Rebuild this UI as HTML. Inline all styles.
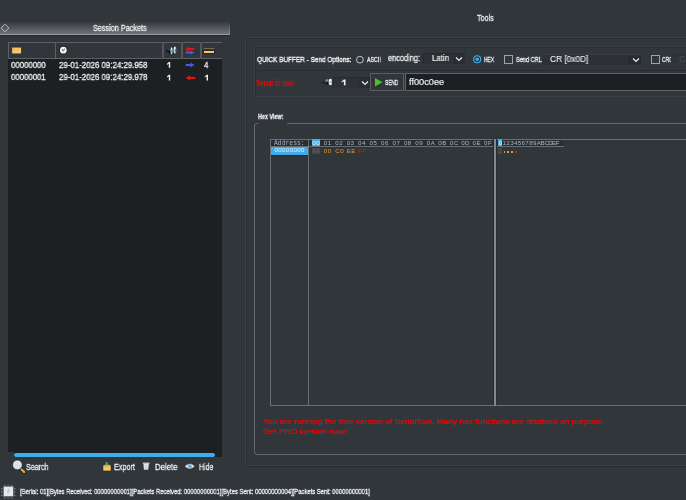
<!DOCTYPE html>
<html><head><meta charset="utf-8">
<style>
html,body{margin:0;padding:0;}
body{width:686px;height:500px;overflow:hidden;background:#31363b;position:relative;font-family:"Liberation Sans",sans-serif;color:#eff0f1;}
.a{position:absolute;}
.t{position:absolute;white-space:nowrap;line-height:1;transform-origin:0 0;will-change:transform;-webkit-text-stroke-width:0.3px;}
.m{font-family:"Liberation Mono",monospace;-webkit-text-stroke-width:0 !important;}
</style></head><body>

<!-- ============ LEFT PANEL ============ -->
<!-- title bar -->
<div class="a" style="left:0;top:22px;width:230px;height:12px;background:linear-gradient(#353a3e,#707376);"></div>
<div class="a" style="left:0;top:34px;width:230px;height:1px;background:#9a9c9e;"></div>
<div class="a" style="left:0;top:35px;width:230px;height:1px;background:#22262a;"></div>
<div class="a" style="left:229px;top:26px;width:1px;height:8px;background:linear-gradient(#5a5e62,#8a8d90);"></div>
<svg class="a" style="left:0px;top:22px" width="12" height="12" viewBox="0 22 12 12"><path d="M1.2 28 L5 24.2 L8.8 28 L5 31.8 Z" fill="none" stroke="#c4c6c8" stroke-width="0.9"/></svg>
<div id="sp" class="t" style="left:92.80px;top:23.40px;font-size:9.5px;transform:scaleX(0.764);">Session Packets</div>

<!-- table -->
<div class="a" style="left:8px;top:42px;width:214px;height:410px;background:#1d2023;"></div>
<div class="a" style="left:8px;top:42px;width:214px;height:17px;background:#31363b;"></div>
<div class="a" style="left:8px;top:42px;width:214px;height:1px;background:#5d6165;"></div>
<div class="a" style="left:8px;top:58px;width:214px;height:1px;background:#5d6165;"></div>
<div class="a" style="left:8px;top:42px;width:1px;height:17px;background:#5d6165;"></div>
<div class="a" style="left:55px;top:42px;width:1px;height:17px;background:#5d6165;"></div>
<div class="a" style="left:162px;top:42px;width:2px;height:17px;background:#52565a;"></div>
<div class="a" style="left:181px;top:42px;width:2px;height:17px;background:#52565a;"></div>
<div class="a" style="left:200px;top:42px;width:2px;height:17px;background:#52565a;"></div>
<!-- header icons -->
<svg class="a" style="left:10px;top:45px" width="13" height="11" viewBox="10 45 13 11"><rect x="11.8" y="47.1" width="9.6" height="6.8" fill="#f5c66a" stroke="#1c2a3c" stroke-width="0.7"/><path d="M13 49.5 h6" stroke="#e0a850" stroke-width="0.5"/></svg>
<svg class="a" style="left:58px;top:45px" width="11" height="11" viewBox="58 45 11 11"><circle cx="63.3" cy="50.2" r="4.1" fill="#15191c"/><circle cx="63.3" cy="50.2" r="3.4" fill="#f6f6f6"/><path d="M61.9 49.5 L63.2 50.4 L64.9 48.8" stroke="#1a1d20" stroke-width="0.9" fill="none"/><path d="M63.3 50.8 V52.2" stroke="#e0a070" stroke-width="0.8"/></svg>
<svg class="a" style="left:164px;top:45px" width="14" height="10" viewBox="164 45 14 10"><path d="M165.8 50.9 L171 48.2 L171 54 Z" fill="#08090a"/><path d="M167 50.2 L169.6 48.9 L169.6 50.6 Z" fill="#60646a"/><ellipse cx="171.7" cy="50.7" rx="1.2" ry="3.4" fill="#eef2f6"/><rect x="171" y="50.2" width="1.6" height="2.6" fill="#5ab4ea"/><path d="M173.1 46.8 V54" stroke="#050607" stroke-width="1"/><ellipse cx="174.8" cy="50" rx="1.3" ry="3.5" fill="#eef2f6"/><rect x="174.7" y="48.6" width="1.5" height="4" fill="#3a8ed8"/></svg>
<svg class="a" style="left:184px;top:45px" width="12" height="11" viewBox="184 45 12 11"><path d="M185.3 49 L188.9 46.5 L188.9 48 L194.2 48 L194.2 50 L188.9 50 L188.9 51.5 Z" fill="#ff0a0a"/><path d="M194.2 52.5 L190.7 50.5 L190.7 51.6 L185.7 51.6 L185.7 53.4 L190.7 53.4 L190.7 54.5 Z" fill="#4a5ae6"/></svg>
<div class="a" style="left:204.4px;top:48.1px;width:9.2px;height:1.2px;background:#7e6844;"></div>
<div class="a" style="left:204.2px;top:50.6px;width:9.6px;height:2.4px;background:#f5c66a;box-shadow:0 0 0 0.7px #1c2430;"></div>

<!-- rows -->
<div id="t1" class="t" style="left:11.4px;top:60.6px;font-size:8.5px;transform:scaleX(0.919);">00000000</div>
<div id="t2" class="t" style="left:58.6px;top:60.6px;font-size:8.5px;transform:scaleX(0.927);">29-01-2026 09:24:29.958</div>
<svg class="a" style="left:166px;top:61px" width="6" height="8" viewBox="166 61 6 8"><path d="M168.80 62.00 H170.20 V67.80 H168.80 V63.60 L167.00 64.90 V63.70 Z" fill="#eff0f1"/></svg>
<svg class="a" style="left:184px;top:61px" width="12" height="8" viewBox="184 61 12 8"><path d="M194.4 65.1 L190.4 62.6 L190.4 64.1 L185.7 64.1 L185.7 66.1 L190.4 66.1 L190.4 67.6 Z" fill="#4a5ae6"/></svg>
<div id="t4" class="t" style="left:204.2px;top:60.6px;font-size:8.5px;transform:scaleX(0.908);">4</div>

<div id="t5" class="t" style="left:11.4px;top:73.2px;font-size:8.5px;transform:scaleX(0.917);">00000001</div>
<div id="t6" class="t" style="left:58.6px;top:73.2px;font-size:8.5px;transform:scaleX(0.927);">29-01-2026 09:24:29.978</div>
<svg class="a" style="left:166px;top:73px" width="6" height="8" viewBox="166 73 6 8"><path d="M168.80 74.70 H170.20 V80.40 H168.80 V76.30 L167.00 77.60 V76.40 Z" fill="#eff0f1"/></svg>
<svg class="a" style="left:184px;top:74px" width="12" height="8" viewBox="184 74 12 8"><path d="M185.9 77.9 L190 75.3 L190 76.9 L195.3 76.9 L195.3 78.9 L190 78.9 L190 80.5 Z" fill="#ff0a0a"/></svg>
<svg class="a" style="left:203px;top:73px" width="6" height="8" viewBox="203 73 6 8"><path d="M206.60 74.70 H208.00 V80.40 H206.60 V76.30 L204.80 77.60 V76.40 Z" fill="#eff0f1"/></svg>

<!-- scrollbar -->
<div class="a" style="left:14px;top:452px;width:208px;height:5px;background:#1d2023;"></div>
<div class="a" style="left:14px;top:453px;width:201px;height:4px;border-radius:2px;background:#3daee9;"></div>

<!-- buttons -->
<svg class="a" style="left:11px;top:459px" width="16" height="15" viewBox="11 459 16 15"><path d="M21.3 469.2 L24.6 472.4" stroke="#15202c" stroke-width="3.4" stroke-linecap="round"/><path d="M21.6 469.5 L24.3 472.1" stroke="#f5a028" stroke-width="2.2" stroke-linecap="round"/><circle cx="17.4" cy="464.9" r="4.1" fill="#d4e2f0" stroke="#f4f8fc" stroke-width="1.1"/><circle cx="17.4" cy="464.9" r="4.7" fill="none" stroke="#1a222c" stroke-width="0.5"/></svg>
<div id="t9" class="t" style="left:26.30px;top:462.90px;font-size:9.2px;transform:scaleX(0.769);">Search</div>
<svg class="a" style="left:101px;top:461px" width="12" height="12" viewBox="101 461 12 12"><path d="M103 465.5 L105 464.6 L109 464.6 L111 465.5 L111 470.9 L103 470.9 Z" fill="#f5c66a" stroke="#1c2430" stroke-width="0.5"/><path d="M103.2 466.6 H110.8" stroke="#d8a24e" stroke-width="0.6"/><rect x="105.7" y="462.1" width="2" height="3.4" fill="#3cb43c"/></svg>
<div id="t10" class="t" style="left:113.9px;top:462.8px;font-size:9px;transform:scaleX(0.804);">Export</div>
<svg class="a" style="left:141px;top:461px" width="10" height="11" viewBox="141 461 10 11"><path d="M143 463.2 H149.2 L148.6 470 H143.6 Z" fill="#dfe8f2" stroke="#2a3440" stroke-width="0.6"/><rect x="142.8" y="462.6" width="6.6" height="1.3" fill="#c8d2dc"/><path d="M145.2 465 V469 M147 465 V469" stroke="#a8b4c0" stroke-width="0.5"/></svg>
<div id="t11" class="t" style="left:155.4px;top:462.8px;font-size:9px;transform:scaleX(0.864);">Delete</div>
<svg class="a" style="left:183px;top:461px" width="14" height="11" viewBox="183 461 14 11"><path d="M184.8 466.3 Q189.8 461.4 194.7 466.3 Q189.8 471.2 184.8 466.3 Z" fill="#e8f2fa" stroke="#c8b078" stroke-width="0.8"/><path d="M184.2 466.3 Q189.8 460.6 195.3 466.3 Q189.8 472 184.2 466.3 Z" fill="none" stroke="#151b22" stroke-width="0.5"/><circle cx="189.8" cy="466.3" r="2.3" fill="#8cc8ec"/><path d="M188.4 465 L191.2 467.6" stroke="#4a6a90" stroke-width="1"/></svg>
<div id="t12" class="t" style="left:199.4px;top:462.8px;font-size:9px;transform:scaleX(0.772);">Hide</div>

<!-- status bar -->
<svg class="a" style="left:0px;top:484px" width="17" height="16" viewBox="0 484 17 16"><g fill="#6c737a"><rect x="4.2" y="484.8" width="1.5" height="1.5"/><rect x="7.4" y="484.8" width="1.5" height="1.5"/><rect x="10.9" y="484.8" width="1.5" height="1.5"/><rect x="4.2" y="497.4" width="1.5" height="1.5"/><rect x="7.4" y="497.4" width="1.5" height="1.5"/><rect x="10.9" y="497.4" width="1.5" height="1.5"/><rect x="1" y="488" width="1.5" height="1.5"/><rect x="1" y="491.2" width="1.5" height="1.5"/><rect x="1" y="494.5" width="1.5" height="1.5"/><rect x="14" y="488" width="1.5" height="1.5"/><rect x="14" y="491.2" width="1.5" height="1.5"/><rect x="14" y="494.5" width="1.5" height="1.5"/></g><rect x="3.4" y="486.3" width="9.9" height="10.1" fill="#dde9f6" stroke="#56667a" stroke-width="0.6"/><path d="M8.6 488.8 L6.8 492 L8.2 492 L7.2 494.6 L9.6 491 L8.2 491 L9.4 488.8 Z" fill="#f0b030"/></svg>
<div id="t13" class="t" style="left:20.2px;top:488px;font-size:7.6px;transform:scaleX(0.776);">[Serial: 01][Bytes Received: 00000000001][Packets Received: 00000000001][Bytes Sent: 00000000004][Packets Sent: 00000000001]</div>

<!-- ============ RIGHT PANEL ============ -->
<div id="t14" class="t" style="left:477.20px;top:13.80px;font-size:9px;transform:scaleX(0.792);">Tools</div>

<!-- outer box -->
<div class="a" style="left:245px;top:37px;width:460px;height:427px;border-top:1px solid #3a3f44;border-left:1px solid #3a3f44;"></div><div class="a" style="left:246px;top:38px;width:460px;height:427px;border-top:1px solid #2a2e32;border-left:1px solid #2a2e32;"></div><div class="a" style="left:245px;top:466px;width:441px;height:1px;background:#2a2e32;"></div><div class="a" style="left:246px;top:465px;width:440px;height:1px;background:#3a3f44;"></div>
<!-- inner quick buffer box -->
<div class="a" style="left:254px;top:46px;width:460px;height:48px;border-top:1px solid #3a3f44;border-left:1px solid #3a3f44;"></div><div class="a" style="left:255px;top:47px;width:460px;height:48px;border:1px solid #292d31;"></div><div class="a" style="left:255px;top:96px;width:431px;height:1px;background:#3a3f44;"></div>
<div class="a" style="left:256px;top:70px;width:430px;height:1px;background:#292d31;"></div>

<div id="t15" class="t" style="left:257.00px;top:55.50px;font-size:8px;transform:scaleX(0.803);-webkit-text-stroke-width:0.4px;">QUICK BUFFER - Send Options:</div>
<svg class="a" style="left:354px;top:54px" width="12" height="12" viewBox="354 54 12 12"><circle cx="359.9" cy="59.7" r="3.4" fill="none" stroke="#d4d6d8" stroke-width="0.9"/></svg>
<div id="t16" class="t" style="left:366.80px;top:57.00px;font-size:6.6px;transform:scaleX(0.798);">ASCII</div>
<div id="t17" class="t" style="left:387.6px;top:54px;font-size:9px;transform:scaleX(0.821);">encoding:</div>
<div class="a" style="left:423px;top:53px;width:42px;height:11px;background:#2e3236;border-top:1px solid #25292c;border-left:1px solid #25292c;box-sizing:border-box;"></div><div class="a" style="left:454px;top:55px;width:11px;height:9px;background:#292d31;"></div>
<div id="t18" class="t" style="left:432.20px;top:54.30px;font-size:8.5px;transform:scaleX(0.924);-webkit-text-stroke-width:0.2px;">Latin</div>
<svg class="a" style="left:455px;top:56px" width="8" height="6" viewBox="0 0 8 6"><path d="M1 1.5 L4 4.5 L7 1.5" stroke="#eee" stroke-width="1.2" fill="none"/></svg>
<svg class="a" style="left:471px;top:53px" width="12" height="12" viewBox="471 53 12 12"><circle cx="477.2" cy="59.3" r="3.5" fill="none" stroke="#3daee9" stroke-width="1.1"/><circle cx="477.2" cy="59.3" r="1.7" fill="#3daee9"/></svg>

<div id="t19" class="t" style="left:484.30px;top:57.00px;font-size:6.6px;transform:scaleX(0.736);">HEX</div>
<div class="a" style="left:504px;top:55px;width:7px;height:7px;border:1px solid #a0a2a4;"></div>
<div id="t20" class="t" style="left:516.00px;top:57.00px;font-size:6.6px;transform:scaleX(0.85);">Send CRLF</div>
<div class="a" style="left:542px;top:54px;width:99px;height:10px;background:#2d3136;border-top:1px solid #3a3f44;z-index:1;"></div>
<div id="t21" class="t" style="left:550.2px;top:55px;font-size:8.5px;transform:scaleX(0.979);z-index:2;-webkit-text-stroke-width:0.1px;">CR [0x0D]</div>
<div class="a" style="left:628px;top:56px;width:13px;height:8px;background:#272b2f;z-index:1;"></div><svg class="a" style="left:632px;top:57px;z-index:2" width="8" height="6" viewBox="0 0 8 6"><path d="M1 1.5 L4 4.5 L7 1.5" stroke="#eee" stroke-width="1.2" fill="none"/></svg>
<div class="a" style="left:651px;top:55px;width:7px;height:7px;border:1px solid #a0a2a4;"></div>
<div id="t22" class="t" style="left:662.40px;top:57.00px;font-size:6.6px;transform:scaleX(0.75);">CRC</div>
<div class="a" style="left:671px;top:54px;width:15px;height:9px;background:#2e3337;z-index:1;"></div>
<div class="a" style="left:679px;top:55px;font-size:9px;line-height:1;color:#4a4f54;z-index:2;">C</div>

<div id="t23" class="t" style="left:256.40px;top:79.40px;font-size:8.5px;color:#ff0000;font-weight:bold;transform:scaleX(0.742);-webkit-text-stroke-width:0px;">Serial in use:</div>
<svg class="a" style="left:320px;top:77px" width="14" height="10" viewBox="320 77 14 10"><path d="M321.6 82.4 L328.6 78.9 L328.6 85.1 Z" fill="#15181b"/><path d="M325.5 79.8 L328.4 78.9 L328.4 81.5 L325.5 81.8 Z" fill="#8a8e92"/><path d="M323 82 L326 81 L326 82.6 Z" fill="#55595d"/><ellipse cx="330.4" cy="82" rx="1.7" ry="3.2" fill="#f2f6fa"/><path d="M331.2 79.5 Q332.4 82 331.2 84.5 Q331 82 331.2 79.5 Z" fill="#2a7ad8"/><rect x="329.4" y="81.4" width="1.6" height="1.8" fill="#8ad0f0"/></svg>
<div class="a" style="left:333px;top:77px;width:37px;height:11px;background:#2e3236;border-top:1px solid #25292c;border-left:1px solid #25292c;box-sizing:border-box;"></div><div class="a" style="left:359px;top:79px;width:11px;height:9px;background:#292d31;"></div>
<svg class="a" style="left:340px;top:78px" width="6" height="8" viewBox="340 78 6 8"><path d="M343.90 79.60 H345.50 V85.20 H343.90 V81.20 L341.80 82.50 V81.30 Z" fill="#eff0f1"/></svg>
<svg class="a" style="left:361px;top:80px" width="8" height="6" viewBox="0 0 8 6"><path d="M1 1.5 L4 4.5 L7 1.5" stroke="#eee" stroke-width="1.2" fill="none"/></svg>
<div class="a" style="left:370px;top:73px;width:32px;height:16px;border:1px solid #5a5e62;background:#31363b;"></div>
<svg class="a" style="left:375px;top:78px" width="8" height="9" viewBox="0 0 8 9"><path d="M0 0 L7.5 4.2 L0 8.5 Z" fill="#4cc02c"/></svg>
<div id="t25" class="t" style="left:385.00px;top:79.70px;font-size:6.6px;transform:scaleX(0.73);">SEND</div>
<div class="a" style="left:405px;top:73px;width:290px;height:16px;border:1px solid #62666a;background:#1d2023;"></div>
<div id="t26" class="t" style="left:408.80px;top:78.30px;font-size:9px;transform:scaleX(1.024);-webkit-text-stroke-width:0.15px;">ff00c0ee</div>

<!-- Hex View group -->
<div id="t27" class="t" style="left:258.00px;top:112.60px;font-size:7px;font-weight:bold;transform:scaleX(0.77);">Hex View:</div>
<div class="a" style="left:254px;top:123px;width:460px;height:330px;border:1px solid #64686c;border-radius:3px;"></div>
<div class="a" style="left:258px;top:122px;width:29px;height:3px;background:#31363b;"></div>

<!-- hex table -->
<div class="a" style="left:270px;top:139px;width:416px;height:1px;background:#6a6e72;"></div>
<div class="a" style="left:271px;top:140px;width:292px;height:7px;background:#2a2e32;"></div>
<div class="a" style="left:270px;top:146px;width:294px;height:1px;background:#6a6e72;"></div>
<div class="a" style="left:270px;top:405px;width:416px;height:1px;background:#6a6e72;"></div>
<div class="a" style="left:270px;top:139px;width:1px;height:267px;background:#6a6e72;"></div>
<div class="a" style="left:308px;top:139px;width:1px;height:267px;background:#6a6e72;"></div>
<div class="a" style="left:493px;top:139px;width:1px;height:266px;background:#272b2f;"></div><div class="a" style="left:496px;top:139px;width:1px;height:266px;background:#2a2e32;"></div><div class="a" style="left:494px;top:139px;width:2px;height:267px;background:#85888b;"></div>
<div class="a" style="left:271px;top:147px;width:37px;height:8px;background:#3daee9;"></div><div class="a" style="left:271px;top:155px;width:37px;height:1px;background:#2a2422;"></div>

<div id="t28" class="t m" style="left:274.20px;top:140.70px;font-size:6.4px;color:#a2b4ca;transform:scaleX(1);">Address:</div>
<div class="a" style="left:312px;top:139px;width:8px;height:7px;background:#3daee9;"></div>
<div class="a" style="left:312.30px;top:139.65px;font-size:6.2px;line-height:1;letter-spacing:0.5px;color:#eef6fc;white-space:nowrap;">00</div><div class="a" style="left:323.75px;top:139.65px;font-size:6.2px;line-height:1;letter-spacing:0.5px;color:#a4b6cc;white-space:nowrap;">01</div><div class="a" style="left:335.20px;top:139.65px;font-size:6.2px;line-height:1;letter-spacing:0.5px;color:#a4b6cc;white-space:nowrap;">02</div><div class="a" style="left:346.65px;top:139.65px;font-size:6.2px;line-height:1;letter-spacing:0.5px;color:#a4b6cc;white-space:nowrap;">03</div><div class="a" style="left:358.10px;top:139.65px;font-size:6.2px;line-height:1;letter-spacing:0.5px;color:#a4b6cc;white-space:nowrap;">04</div><div class="a" style="left:369.55px;top:139.65px;font-size:6.2px;line-height:1;letter-spacing:0.5px;color:#a4b6cc;white-space:nowrap;">05</div><div class="a" style="left:381.00px;top:139.65px;font-size:6.2px;line-height:1;letter-spacing:0.5px;color:#a4b6cc;white-space:nowrap;">06</div><div class="a" style="left:392.45px;top:139.65px;font-size:6.2px;line-height:1;letter-spacing:0.5px;color:#a4b6cc;white-space:nowrap;">07</div><div class="a" style="left:403.90px;top:139.65px;font-size:6.2px;line-height:1;letter-spacing:0.5px;color:#a4b6cc;white-space:nowrap;">08</div><div class="a" style="left:415.35px;top:139.65px;font-size:6.2px;line-height:1;letter-spacing:0.5px;color:#a4b6cc;white-space:nowrap;">09</div><div class="a" style="left:426.80px;top:139.65px;font-size:6.2px;line-height:1;letter-spacing:0.5px;color:#a4b6cc;white-space:nowrap;">0A</div><div class="a" style="left:438.25px;top:139.65px;font-size:6.2px;line-height:1;letter-spacing:0.5px;color:#a4b6cc;white-space:nowrap;">0B</div><div class="a" style="left:449.70px;top:139.65px;font-size:6.2px;line-height:1;letter-spacing:0.5px;color:#a4b6cc;white-space:nowrap;">0C</div><div class="a" style="left:461.15px;top:139.65px;font-size:6.2px;line-height:1;letter-spacing:0.5px;color:#a4b6cc;white-space:nowrap;">0D</div><div class="a" style="left:472.60px;top:139.65px;font-size:6.2px;line-height:1;letter-spacing:0.5px;color:#a4b6cc;white-space:nowrap;">0E</div><div class="a" style="left:484.05px;top:139.65px;font-size:6.2px;line-height:1;letter-spacing:0.5px;color:#a4b6cc;white-space:nowrap;">0F</div>
<div class="a" style="left:274.40px;top:147.25px;font-size:6.2px;line-height:1;letter-spacing:0px;color:#e4f2fc;white-space:nowrap;">0</div><div class="a" style="left:278.21px;top:147.25px;font-size:6.2px;line-height:1;letter-spacing:0px;color:#e4f2fc;white-space:nowrap;">0</div><div class="a" style="left:282.02px;top:147.25px;font-size:6.2px;line-height:1;letter-spacing:0px;color:#e4f2fc;white-space:nowrap;">0</div><div class="a" style="left:285.83px;top:147.25px;font-size:6.2px;line-height:1;letter-spacing:0px;color:#e4f2fc;white-space:nowrap;">0</div><div class="a" style="left:289.64px;top:147.25px;font-size:6.2px;line-height:1;letter-spacing:0px;color:#e4f2fc;white-space:nowrap;">0</div><div class="a" style="left:293.45px;top:147.25px;font-size:6.2px;line-height:1;letter-spacing:0px;color:#e4f2fc;white-space:nowrap;">0</div><div class="a" style="left:297.26px;top:147.25px;font-size:6.2px;line-height:1;letter-spacing:0px;color:#e4f2fc;white-space:nowrap;">0</div><div class="a" style="left:301.07px;top:147.25px;font-size:6.2px;line-height:1;letter-spacing:0px;color:#e4f2fc;white-space:nowrap;">0</div>
<div class="a" style="left:312px;top:148px;width:8px;height:6px;background:#45494d;"></div>
<div class="a" style="left:312.30px;top:147.75px;font-size:6.2px;line-height:1;letter-spacing:0.5px;color:#5c6064;white-space:nowrap;">FF</div><div class="a" style="left:323.75px;top:147.75px;font-size:6.2px;line-height:1;letter-spacing:0.5px;color:#e09a28;white-space:nowrap;">00</div><div class="a" style="left:335.20px;top:147.75px;font-size:6.2px;line-height:1;letter-spacing:0.5px;color:#e09a28;white-space:nowrap;">C0</div><div class="a" style="left:346.65px;top:147.75px;font-size:6.2px;line-height:1;letter-spacing:0.5px;color:#e09a28;white-space:nowrap;">EE</div><div class="a" style="left:358.10px;top:147.75px;font-size:6.2px;line-height:1;letter-spacing:0.5px;color:#e01818;white-space:nowrap;">FF</div>
<div class="a" style="left:498px;top:139px;width:4px;height:7px;background:#3daee9;"></div>
<div class="a" style="left:498.70px;top:139.65px;font-size:6.2px;line-height:1;letter-spacing:0px;color:#eef6fc;white-space:nowrap;">0</div><div class="a" style="left:502.51px;top:139.65px;font-size:6.2px;line-height:1;letter-spacing:0px;color:#a4b6cc;white-space:nowrap;">1</div><div class="a" style="left:506.32px;top:139.65px;font-size:6.2px;line-height:1;letter-spacing:0px;color:#a4b6cc;white-space:nowrap;">2</div><div class="a" style="left:510.13px;top:139.65px;font-size:6.2px;line-height:1;letter-spacing:0px;color:#a4b6cc;white-space:nowrap;">3</div><div class="a" style="left:513.94px;top:139.65px;font-size:6.2px;line-height:1;letter-spacing:0px;color:#a4b6cc;white-space:nowrap;">4</div><div class="a" style="left:517.75px;top:139.65px;font-size:6.2px;line-height:1;letter-spacing:0px;color:#a4b6cc;white-space:nowrap;">5</div><div class="a" style="left:521.56px;top:139.65px;font-size:6.2px;line-height:1;letter-spacing:0px;color:#a4b6cc;white-space:nowrap;">6</div><div class="a" style="left:525.37px;top:139.65px;font-size:6.2px;line-height:1;letter-spacing:0px;color:#a4b6cc;white-space:nowrap;">7</div><div class="a" style="left:529.18px;top:139.65px;font-size:6.2px;line-height:1;letter-spacing:0px;color:#a4b6cc;white-space:nowrap;">8</div><div class="a" style="left:532.99px;top:139.65px;font-size:6.2px;line-height:1;letter-spacing:0px;color:#a4b6cc;white-space:nowrap;">9</div><div class="a" style="left:536.80px;top:139.65px;font-size:6.2px;line-height:1;letter-spacing:0px;color:#a4b6cc;white-space:nowrap;">A</div><div class="a" style="left:540.61px;top:139.65px;font-size:6.2px;line-height:1;letter-spacing:0px;color:#a4b6cc;white-space:nowrap;">B</div><div class="a" style="left:544.42px;top:139.65px;font-size:6.2px;line-height:1;letter-spacing:0px;color:#a4b6cc;white-space:nowrap;">C</div><div class="a" style="left:548.23px;top:139.65px;font-size:6.2px;line-height:1;letter-spacing:0px;color:#a4b6cc;white-space:nowrap;">D</div><div class="a" style="left:552.04px;top:139.65px;font-size:6.2px;line-height:1;letter-spacing:0px;color:#a4b6cc;white-space:nowrap;">E</div><div class="a" style="left:555.85px;top:139.65px;font-size:6.2px;line-height:1;letter-spacing:0px;color:#a4b6cc;white-space:nowrap;">F</div>
<div class="a" style="left:498px;top:148px;width:4px;height:6px;background:#45494d;"></div>
<div class="a" style="left:499.6px;top:148px;font-size:6.2px;line-height:1;color:#5c6064;">.</div><div class="a" style="left:503.6px;top:150.8px;width:1.6px;height:1.8px;background:#e09a28;"></div><div class="a" style="left:507.4px;top:150.8px;width:1.6px;height:1.8px;background:#e09a28;"></div><div class="a" style="left:511.2px;top:150.8px;width:1.6px;height:1.8px;background:#e09a28;"></div><div class="a" style="left:515.0px;top:150.8px;width:1.6px;height:1.8px;background:#e01818;"></div>

<div id="t34" class="t" style="left:262.6px;top:417px;font-size:8px;color:rgb(255, 0, 0);line-height:10px;transform:scaleX(1.056);-webkit-text-stroke-width:0.15px;">You are running the free version of SerialTool. Many hex functions are disabled on purpose.<br>Get PRO version now!</div>

</body></html>
